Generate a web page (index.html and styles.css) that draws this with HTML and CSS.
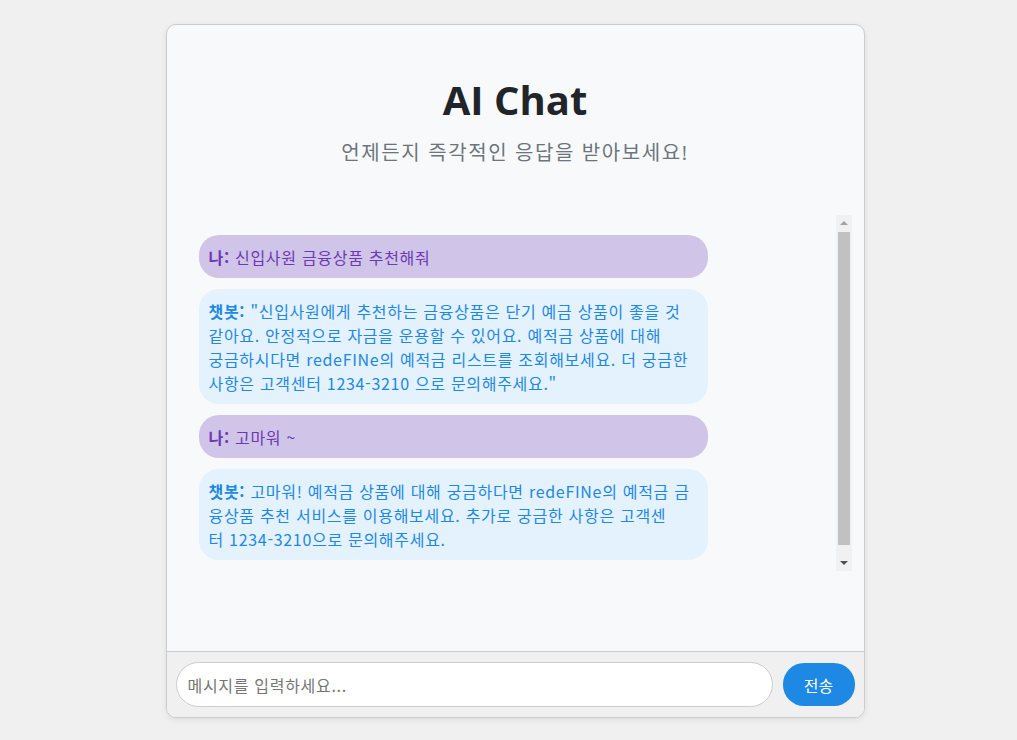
FILE: index.html
```html
<!DOCTYPE html>
<html lang="ko">
<head>
<meta charset="utf-8">
<title>AI Chat</title>
<link rel="stylesheet" href="styles.css">
</head>
<body>
<div class="card">
  <header class="header">
    <h1 class="title">AI Chat</h1>
    <p class="subtitle">언제든지 즉각적인 응답을 받아보세요!</p>
  </header>
  <div class="chat">
    <div class="messages">
      <div class="msg user"><strong>나:</strong> 신입사원 금융상품 추천해줘</div>
      <div class="msg bot"><strong>챗봇:</strong> "신입사원에게 추천하는 금융상품은 단기 예금 상품이 좋을 것<br>같아요. 안정적으로 자금을 운용할 수 있어요. 예적금 상품에 대해<br>궁금하시다면 redeFINe의 예적금 리스트를 조회해보세요. 더 궁금한<br>사항은 고객센터 1234-3210 으로 문의해주세요."</div>
      <div class="msg user"><strong>나:</strong> 고마워 ~</div>
      <div class="msg bot"><strong>챗봇:</strong> 고마워! 예적금 상품에 대해 궁금하다면 redeFINe의 예적금 금<br>융상품 추천 서비스를 이용해보세요. 추가로 궁금한 사항은 고객센<br>터 1234-3210으로 문의해주세요.</div>
    </div>
    <div class="scrollbar" aria-hidden="true">
      <span class="arrow up"></span>
      <span class="track"><span class="thumb"></span></span>
      <span class="arrow down"></span>
    </div>
  </div>
  <form class="composer">
    <input class="input" type="text" placeholder="메시지를 입력하세요...">
    <button class="send" type="button">전송</button>
  </form>
</div>
</body>
</html>
```
FILE: styles.css
```css
* { box-sizing: border-box; }
html, body { height: 100%; }
body {
  margin: 0;
  padding: 24px 0 0 13px;
  background: #f0f0f0;
  display: flex;
  justify-content: center;
  align-items: flex-start;
  font-family: "Open Sans", "Noto Sans CJK KR", sans-serif;
}
.card {
  width: 699px;
  height: 694px;
  background: #f8f9fa;
  border: 1px solid #cccccc;
  border-radius: 10px;
  box-shadow: 0 2px 6px rgba(0,0,0,0.08);
  display: flex;
  flex-direction: column;
  overflow: hidden;
}
.header {
  padding: 50px 20px 0;
  text-align: center;
  height: 190px;
}
.title {
  margin: 0;
  font-size: 40px;
  line-height: 50px;
  font-weight: 700;
  color: #212529;
}
.subtitle {
  margin: 14px 0 0;
  font-size: 20px;
  line-height: 28px;
  letter-spacing: 0.08em;
  color: #6c757d;
}
.chat {
  display: flex;
  height: 356px;
  margin: 0 12px;
}
.messages {
  flex: 1;
  overflow: hidden;
  padding: 9px 0 0 20px;
}
.msg {
  width: 509px;
  margin: 0 0 11px;
  padding: 9.5px 10px;
  border-radius: 20px;
  font-family: "Noto Sans CJK KR", sans-serif;
  font-size: 16px;
  line-height: 24px;
  letter-spacing: 0.7px;
  white-space: nowrap;
}
.msg:first-child { margin-top: 11px; }
.msg strong { font-weight: 700; }
.user { background: #d1c4e9; color: #6a3ab2; }
.bot { background: #e3f2fd; color: #1e88e5; }

.scrollbar {
  width: 16px;
  display: flex;
  flex-direction: column;
  background: #f1f1f1;
}
.arrow {
  height: 16px;
  display: flex;
  align-items: center;
  justify-content: center;
}
.arrow::before {
  content: "";
  width: 0;
  height: 0;
  border-left: 4px solid transparent;
  border-right: 4px solid transparent;
}
.arrow.up::before { border-bottom: 4px solid #a3a3a3; }
.arrow.down::before { border-top: 4px solid #505050; }
.track {
  flex: 1;
  display: flex;
  flex-direction: column;
  padding: 1px 2px 0;
}
.thumb {
  height: 313px;
  background: #c1c1c1;
}

.composer {
  margin: auto 0 0;
  border-top: 1px solid #cccccc;
  background: #f0f0f0;
  padding: 10px 9px;
  display: flex;
  align-items: center;
  gap: 10px;
}
.input {
  flex: 1;
  height: 45px;
  border: 1px solid #cccccc;
  border-radius: 23px;
  background: #ffffff;
  padding: 0 11px;
  font-family: "Noto Sans CJK KR", sans-serif;
  font-size: 16px;
  letter-spacing: 0.7px;
  color: #333;
  outline: none;
}
.input::placeholder { color: #757575; }
.send {
  width: 72px;
  height: 43px;
  border: none;
  border-radius: 21px;
  background: #1e88e5;
  color: #ffffff;
  font-family: "Noto Sans CJK KR", sans-serif;
  font-size: 16px;
}
```
